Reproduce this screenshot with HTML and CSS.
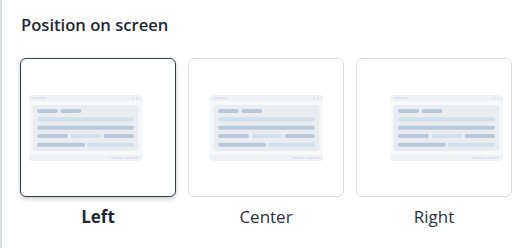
FILE: index.html
```html
<!DOCTYPE html>
<html>
<head>
<meta charset="utf-8">
<link rel="stylesheet" href="styles.css">
</head>
<body>
<div class="panel">
  <h2 class="title">Position on screen</h2>
  <div class="options">
    <div class="option">
      <div class="card card-selected card-left">
        <svg class="preview" width="113" height="66" viewBox="0 0 113 66">
          <defs><clipPath id="c1"><rect width="113" height="66" rx="3"/></clipPath></defs>
          <g clip-path="url(#c1)">
            <rect width="113" height="66" fill="#f7f8fa"/>
            <rect width="113" height="6" fill="#eef1f5"/>
            <rect y="60" width="113" height="6" fill="#eef1f5"/>
          </g>
          <rect x="4" y="2.3" width="13" height="1.4" rx="0.7" fill="#dce2ea"/>
          <circle cx="104" cy="3" r="1" fill="#d9dfe7"/>
          <circle cx="108" cy="3" r="1" fill="#d9dfe7"/>
          <rect x="3.5" y="10" width="106" height="46" rx="3" fill="#e9edf2"/>
          <rect x="8" y="14" width="21" height="4" rx="2" fill="#b9c9db"/>
          <rect x="31.4" y="14" width="21" height="4" rx="2" fill="#b9c9db"/>
          <rect x="8" y="22.3" width="97" height="4" rx="2" fill="#d2dfed"/>
          <rect x="8" y="30.7" width="97" height="4" rx="2" fill="#b9c9db"/>
          <rect x="8" y="39" width="31" height="4" rx="2" fill="#b9c9db"/>
          <rect x="41.5" y="39" width="31" height="4" rx="2" fill="#d2dfed"/>
          <rect x="74.5" y="39" width="30.5" height="4" rx="2" fill="#b9c9db"/>
          <rect x="8" y="47.7" width="48" height="4" rx="2" fill="#b9c9db"/>
          <rect x="58" y="47.7" width="47" height="4" rx="2" fill="#d2dfed"/>
          <rect x="81.7" y="62.3" width="13" height="1.4" rx="0.7" fill="#dce2ea"/>
          <rect x="96.7" y="62.3" width="13" height="1.4" rx="0.7" fill="#dce2ea"/>
        </svg>
      </div>
      <div class="label label-selected">Left</div>
    </div>
    <div class="option">
      <div class="card card-center">
        <svg class="preview" width="113" height="66" viewBox="0 0 113 66">
          <defs><clipPath id="c2"><rect width="113" height="66" rx="3"/></clipPath></defs>
          <g clip-path="url(#c2)">
            <rect width="113" height="66" fill="#f7f8fa"/>
            <rect width="113" height="6" fill="#eef1f5"/>
            <rect y="60" width="113" height="6" fill="#eef1f5"/>
          </g>
          <rect x="4" y="2.3" width="13" height="1.4" rx="0.7" fill="#dce2ea"/>
          <circle cx="104" cy="3" r="1" fill="#d9dfe7"/>
          <circle cx="108" cy="3" r="1" fill="#d9dfe7"/>
          <rect x="3.5" y="10" width="106" height="46" rx="3" fill="#e9edf2"/>
          <rect x="8" y="14" width="21" height="4" rx="2" fill="#b9c9db"/>
          <rect x="31.4" y="14" width="21" height="4" rx="2" fill="#b9c9db"/>
          <rect x="8" y="22.3" width="97" height="4" rx="2" fill="#d2dfed"/>
          <rect x="8" y="30.7" width="97" height="4" rx="2" fill="#b9c9db"/>
          <rect x="8" y="39" width="31" height="4" rx="2" fill="#b9c9db"/>
          <rect x="41.5" y="39" width="31" height="4" rx="2" fill="#d2dfed"/>
          <rect x="74.5" y="39" width="30.5" height="4" rx="2" fill="#b9c9db"/>
          <rect x="8" y="47.7" width="48" height="4" rx="2" fill="#b9c9db"/>
          <rect x="58" y="47.7" width="47" height="4" rx="2" fill="#d2dfed"/>
          <rect x="81.7" y="62.3" width="13" height="1.4" rx="0.7" fill="#dce2ea"/>
          <rect x="96.7" y="62.3" width="13" height="1.4" rx="0.7" fill="#dce2ea"/>
        </svg>
      </div>
      <div class="label">Center</div>
    </div>
    <div class="option">
      <div class="card card-right">
        <svg class="preview" width="113" height="66" viewBox="0 0 113 66">
          <defs><clipPath id="c3"><rect width="113" height="66" rx="3"/></clipPath></defs>
          <g clip-path="url(#c3)">
            <rect width="113" height="66" fill="#f7f8fa"/>
            <rect width="113" height="6" fill="#eef1f5"/>
            <rect y="60" width="113" height="6" fill="#eef1f5"/>
          </g>
          <rect x="4" y="2.3" width="13" height="1.4" rx="0.7" fill="#dce2ea"/>
          <circle cx="104" cy="3" r="1" fill="#d9dfe7"/>
          <circle cx="108" cy="3" r="1" fill="#d9dfe7"/>
          <rect x="3.5" y="10" width="106" height="46" rx="3" fill="#e9edf2"/>
          <rect x="8" y="14" width="21" height="4" rx="2" fill="#b9c9db"/>
          <rect x="31.4" y="14" width="21" height="4" rx="2" fill="#b9c9db"/>
          <rect x="8" y="22.3" width="97" height="4" rx="2" fill="#d2dfed"/>
          <rect x="8" y="30.7" width="97" height="4" rx="2" fill="#b9c9db"/>
          <rect x="8" y="39" width="31" height="4" rx="2" fill="#b9c9db"/>
          <rect x="41.5" y="39" width="31" height="4" rx="2" fill="#d2dfed"/>
          <rect x="74.5" y="39" width="30.5" height="4" rx="2" fill="#b9c9db"/>
          <rect x="8" y="47.7" width="48" height="4" rx="2" fill="#b9c9db"/>
          <rect x="58" y="47.7" width="47" height="4" rx="2" fill="#d2dfed"/>
          <rect x="81.7" y="62.3" width="13" height="1.4" rx="0.7" fill="#dce2ea"/>
          <rect x="96.7" y="62.3" width="13" height="1.4" rx="0.7" fill="#dce2ea"/>
        </svg>
      </div>
      <div class="label">Right</div>
    </div>
  </div>
</div>
</body>
</html>
```
FILE: styles.css
```css
html, body {
  margin: 0;
  padding: 0;
  background: #ffffff;
}
body {
  font-family: "Open Sans", "Noto Sans", sans-serif;
  width: 521px;
  height: 248px;
  overflow: hidden;
}
.panel {
  box-sizing: border-box;
  height: 248px;
  border-left: 2px solid #d8e0e8;
  padding: 14px 0 0 18px;
}
.title {
  margin: 0 0 22px 1px;
  font-size: 16.6px;
  line-height: 22px;
  font-weight: 600;
  color: #1f2733;
}
.options {
  display: grid;
  grid-template-columns: 156px 156px 156px;
  column-gap: 12px;
}
.option {
  display: flex;
  flex-direction: column;
}
.card {
  box-sizing: border-box;
  height: 139px;
  border: 1px solid #dcdcdc;
  border-radius: 6px;
  background: #ffffff;
  display: flex;
  align-items: center;
  padding: 0 8px;
}
.card-selected {
  border-color: #2c3d52;
  box-shadow: 0 2px 5px rgba(0, 0, 0, 0.22);
}
.card-left { justify-content: flex-start; }
.card-center { justify-content: center; }
.card-right { justify-content: flex-end; }
.preview {
  display: block;
  flex: none;
}
.label {
  margin-top: 9px;
  text-align: center;
  font-size: 17px;
  line-height: 22px;
  color: #2a3240;
}
.label-selected {
  font-weight: 700;
  color: #1f2733;
}
```
